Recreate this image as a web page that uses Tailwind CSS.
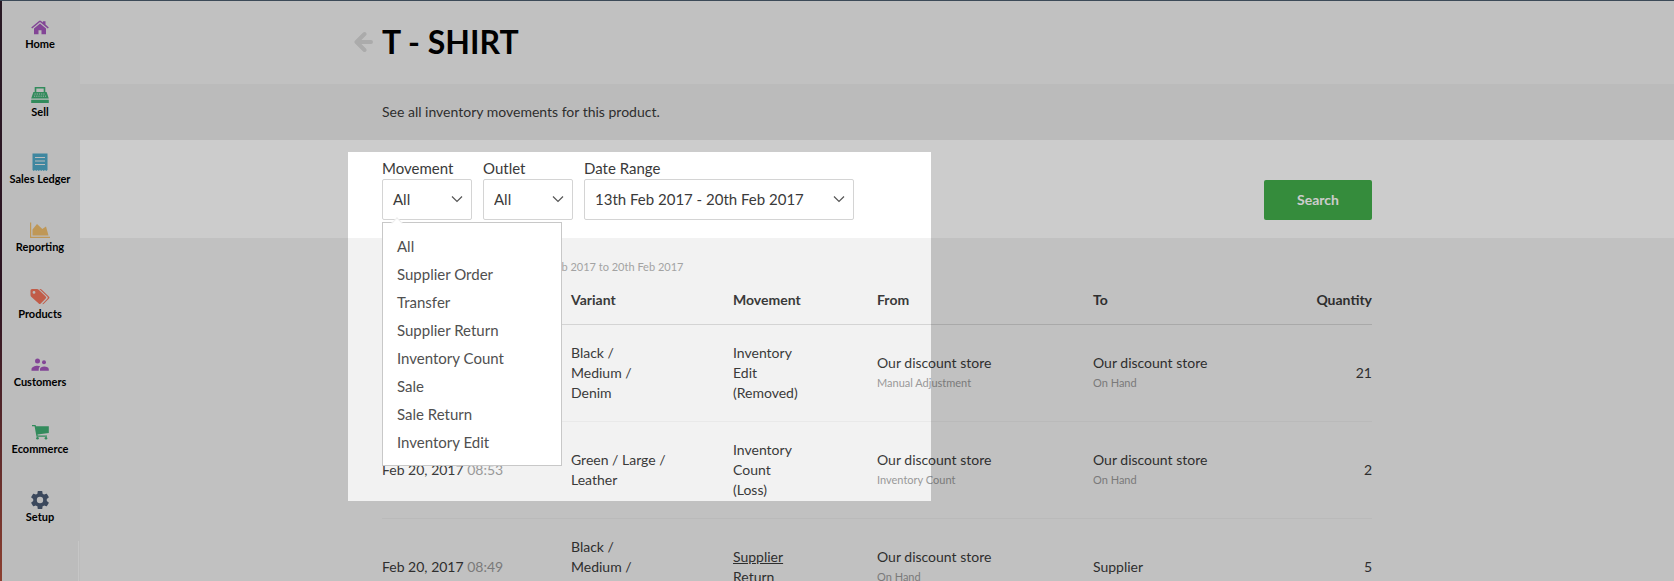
<!DOCTYPE html>
<html lang="en">
<head>
<meta charset="utf-8">
<meta name="viewport" content="width=device-width, initial-scale=1">
<title>T - SHIRT inventory movements</title>
<script src="https://cdn.jsdelivr.net/npm/@tailwindcss/browser@4"></script>
</head>
<body class="font-['Lato',sans-serif] text-sm leading-5 text-[#3a3a3a] bg-[#f2f2f2]">
<div class="h-screen overflow-hidden flex flex-col relative border-t border-[#3c4a58]">
<div class="flex flex-1 min-h-0">
  <div class="w-0.5 shrink-0 bg-linear-to-b from-[#33202e] via-[#38182a] via-50% to-[#b0503c]"></div>

  <!-- Sidebar -->
  <aside class="w-[78px] shrink-0 bg-[#ebebeb] flex flex-col">
    <nav aria-label="Main" class="h-[556px] shrink-0 pt-4 -mb-8 pr-0.5 grid auto-rows-fr text-[11px] leading-[14px] font-bold text-black text-center whitespace-nowrap">
      <a href="#home" class="flex flex-col items-center">
        <svg class="h-5 w-5 text-[#a457bc]" viewBox="0 0 20 20" fill="currentColor"><path d="M2.200 11.600 10 5l7.800 6.600 1-1.100L15.500 7.600V4.200h-2.600v1.300L11 3.900q-1-.8-2 0L1.200 10.500z"/><path d="M10 6.400 4 11.500V17.300h4.500v-4h3v4H16v-5.800z"/></svg>Home</a>
      <a href="#sell" class="flex flex-col items-center">
        <svg class="h-5 w-5 text-[#3fae74]" viewBox="0 0 20 20"><path d="M5.500 7V2.800h9V7" fill="none" stroke="currentColor" stroke-width="1.600"/><path d="M3.400 7h13.200l2.200 6.500H1.200zM1.200 14.800h17.600V18H1.200z" fill="currentColor"/><path d="M4.500 9h11M4 11.200h12" stroke="#ebebeb" stroke-width=".8" stroke-dasharray="1.200 1"/></svg>Sell</a>
      <a href="#ledger" class="flex flex-col items-center">
        <svg class="h-5 w-5 text-[#4fa9c9]" viewBox="0 0 20 20"><path d="M2.500 1.500h15V18l-1.250 1L15 18l-1.250 1-1.250-1-1.250 1L10 18l-1.250 1-1.250-1-1.250 1L5 18l-1.250 1-1.250-1z" fill="currentColor"/><path d="M5 5.500h10M5 9h10M5 12.500h10" stroke="#ebebeb" stroke-width="1"/></svg>Sales Ledger</a>
      <a href="#reporting" class="flex flex-col items-center">
        <svg class="h-5 w-5" viewBox="0 0 20 20"><path d="M.6 2.500v14.900H20" fill="none" stroke="#efbd6c" stroke-width="1.200"/><path d="M2.500 15.500V9.500L7 4l5.300 5L16 6.500l2.500 9z" fill="#efbd6c"/></svg>Reporting</a>
      <a href="#products" class="flex flex-col items-center">
        <svg class="h-5 w-5 text-[#f2735b]" viewBox="0 0 20 20" fill="currentColor"><path fill-rule="evenodd" d="M.5 3.500q0-1.500 1.500-1.500H7q1 0 1.700.7l7 6.800q1 1 0 2l-5 5q-1 1-2 0L1.200 9.700Q.5 9 .5 8zM4 4a1.400 1.400 0 1 0 0 2.800A1.400 1.400 0 0 0 4 4"/><path d="M9.300 2h1.200l1 .5 7.500 7.200q1 .9 0 1.900l-5.200 5.200q-.6.600-1.500.2l5.200-5.500q.8-.9 0-1.800z"/></svg>Products</a>
      <a href="#customers" class="flex flex-col items-center">
        <svg class="h-5 w-5 text-[#a457bc]" viewBox="0 0 20 20" fill="currentColor"><circle cx="7.500" cy="6" r="2.500"/><circle cx="14" cy="7.200" r="2"/><path d="M1.500 15.800v-1.600c0-2.300 3.300-3.500 6-3.500q1.500 0 2.700.5-1.600 1.300-1.500 3v1.600zM10 15.800v-1.600c0-1.900 2-2.800 4.300-2.800s4.500 1 4.500 2.800v1.600z"/></svg>Customers</a>
      <a href="#ecommerce" class="flex flex-col items-center">
        <svg class="h-5 w-5 text-[#3fae74]" viewBox="0 0 20 20" fill="currentColor"><path d="M2 3h3.500l.6 1.300H18.800V11L7.500 12.500l.2 1H17v1.300H6.500L4.600 4.300H2z"/><circle cx="7.500" cy="16.300" r="1.300"/><circle cx="16" cy="16.300" r="1.300"/></svg>Ecommerce</a>
      <a href="#setup" class="flex flex-col items-center">
        <svg class="h-5 w-5 text-[#4a5a74]" viewBox="1 1 22 22" fill="currentColor"><path d="M19.430 12.980c.04-.32.070-.64.070-.98s-.03-.66-.07-.98l2.110-1.650c.19-.15.240-.42.120-.64l-2-3.460c-.12-.22-.39-.3-.61-.22l-2.490 1c-.52-.4-1.080-.73-1.690-.98l-.38-2.650C14.460 2.180 14.250 2 14 2h-4c-.25 0-.46.180-.49.420l-.38 2.650c-.61.250-1.170.590-1.690.980l-2.490-1c-.23-.09-.49 0-.61.220l-2 3.460c-.13.220-.07.490.120.640l2.110 1.650c-.04.320-.07.650-.07.980s.03.660.070.980l-2.110 1.650c-.19.150-.24.420-.12.640l2 3.460c.12.220.390.300.610.220l2.490-1c.52.400 1.080.730 1.690.980l.38 2.650c.03.240.240.420.490.420h4c.25 0 .46-.18.490-.42l.38-2.650c.61-.25 1.170-.59 1.690-.98l2.490 1c.23.090.490 0 .61-.22l2-3.460c.12-.22.070-.49-.12-.64zM12 15.500a3.500 3.500 0 1 1 0-7 3.500 3.500 0 0 1 0 7z"/></svg>Setup</a>
    </nav>
    <div class="flex-1 mt-4 mr-px border-r border-[#f8f8f8]"></div>
  </aside>

  <main class="flex-1 min-w-0">
    <header class="h-[83px] pb-0.5 flex items-center">
      <div class="w-full max-w-[990px] mx-auto flex items-center">
        <a href="#back" aria-label="Back" class="-ml-7 mr-2 shrink-0"><svg class="w-5 h-6" viewBox="0 0 20 24" fill="none" stroke="#d6d6d6" stroke-width="4" stroke-linecap="round" stroke-linejoin="round"><path d="M10.500 4 2.500 12l8 8M3 12h14"/></svg></a>
        <h1 class="text-[32px] leading-10 font-bold text-black">T - SHIRT</h1>
      </div>
    </header>

    <section class="bg-[#eaeaea] py-[18px]">
      <p class="max-w-[990px] mx-auto">See all inventory movements for this product.</p>
    </section>

    <section class="bg-white">
      <form class="relative max-w-[990px] mx-auto flex items-end gap-[11px] pt-[18px] pb-[18px] text-[15px]">
        <div class="relative w-[90px]">
          <label for="movement" class="block pb-px">Movement</label>
          <button id="movement" type="button" aria-haspopup="listbox" aria-expanded="true" class="w-full h-[41px] pl-2.5 pr-2 pb-0.5 flex items-center justify-between border border-[#d4d4d4] rounded-xs bg-white">All
            <svg class="w-3 h-3" viewBox="0 0 12 12" fill="none" stroke="#555" stroke-width="1.200"><path d="m1 3.500 5 5 5-5"/></svg></button>
          <div class="absolute z-10 left-0 top-full mt-0.5 w-[180px] py-[9px] bg-white border border-[#c8c8c8]">
            <span class="absolute left-2.5 -top-1 size-2 rotate-45 bg-white border-l border-t border-[#eee]"></span>
            <ul role="listbox" aria-label="Movement" class="relative leading-7 text-[#505050]">
              <li role="option" aria-selected="true" class="px-3.5">All</li>
              <li role="option" class="px-3.5">Supplier Order</li>
              <li role="option" class="px-3.5">Transfer</li>
              <li role="option" class="px-3.5">Supplier Return</li>
              <li role="option" class="px-3.5">Inventory Count</li>
              <li role="option" class="px-3.5">Sale</li>
              <li role="option" class="px-3.5">Sale Return</li>
              <li role="option" class="px-3.5">Inventory Edit</li>
            </ul>
          </div>
        </div>
        <div class="w-[90px]">
          <label for="outlet" class="block pb-px">Outlet</label>
          <div class="relative">
            <select id="outlet" class="block w-full h-[41px] px-2.5 pb-0.5 appearance-none border border-[#d4d4d4] rounded-xs bg-white"><option>All</option></select>
            <svg class="absolute right-[9px] top-3.5 w-3 h-3 pointer-events-none" viewBox="0 0 12 12" fill="none" stroke="#555" stroke-width="1.200"><path d="m1 3.500 5 5 5-5"/></svg>
          </div>
        </div>
        <div class="w-[270px]">
          <label for="range" class="block pb-px">Date Range</label>
          <div class="relative">
            <select id="range" class="block w-full h-[41px] px-2.5 pb-0.5 appearance-none border border-[#d4d4d4] rounded-xs bg-white"><option>13th Feb 2017 - 20th Feb 2017</option></select>
            <svg class="absolute right-[9px] top-3.5 w-3 h-3 pointer-events-none" viewBox="0 0 12 12" fill="none" stroke="#555" stroke-width="1.200"><path d="m1 3.500 5 5 5-5"/></svg>
          </div>
        </div>
        <button type="submit" class="ml-auto w-[108px] h-10 rounded-xs bg-[#43af4b] text-white text-sm font-bold">Search</button>
        <!-- Spotlight: everything outside this frame is dimmed -->
        <div class="absolute z-20 top-3 -left-[34px] w-[583px] h-[349px] pointer-events-none shadow-[0_0_0_3000px_rgba(0,0,0,0.2)]"></div>
      </form>
    </section>

    <section class="max-w-[990px] mx-auto pt-[19px]">
      <table class="w-full table-fixed border-separate border-spacing-0 text-left">
        <caption class="text-left text-[11px] leading-5 text-[#a3a3a3]">Showing all movements from 13th Feb 2017 to 20th Feb 2017</caption>
        <colgroup><col class="w-[189px]"><col class="w-[162px]"><col class="w-[144px]"><col class="w-[216px]"><col class="w-[189px]"><col></colgroup>
        <thead>
          <tr class="*:border-b *:border-[#d4d4d4] *:pt-[13px] *:pb-3.5 *:font-bold">
            <th scope="col">Date</th><th scope="col">Variant</th><th scope="col">Movement</th><th scope="col">From</th><th scope="col">To</th><th scope="col" class="text-right">Quantity</th>
          </tr>
        </thead>
        <tbody class="[&_td]:py-[18px] [&_td]:border-b [&_td]:border-[#e9e9e9] [&_small]:block [&_small]:text-[11px] [&_small]:leading-5 [&_small]:text-[#999]">
          <tr>
            <td>Feb 20, 2017 <span class="text-[#999]">08:57</span></td>
            <td>Black /<br>Medium /<br>Denim</td>
            <td>Inventory<br>Edit<br>(Removed)</td>
            <td>Our discount store<small>Manual Adjustment</small></td>
            <td>Our discount store<small>On Hand</small></td>
            <td class="text-right">21</td>
          </tr>
          <tr>
            <td>Feb 20, 2017 <span class="text-[#999]">08:53</span></td>
            <td>Green / Large /<br>Leather</td>
            <td>Inventory<br>Count<br>(Loss)</td>
            <td>Our discount store<small>Inventory Count</small></td>
            <td>Our discount store<small>On Hand</small></td>
            <td class="text-right">2</td>
          </tr>
          <tr>
            <td>Feb 20, 2017 <span class="text-[#999]">08:49</span></td>
            <td>Black /<br>Medium /<br>Denim</td>
            <td><a href="#supplier" class="underline">Supplier</a><br>Return</td>
            <td>Our discount store<small>On Hand</small></td>
            <td>Supplier</td>
            <td class="text-right">5</td>
          </tr>
        </tbody>
      </table>
    </section>
  </main>
</div>
</div>
</body>
</html>
